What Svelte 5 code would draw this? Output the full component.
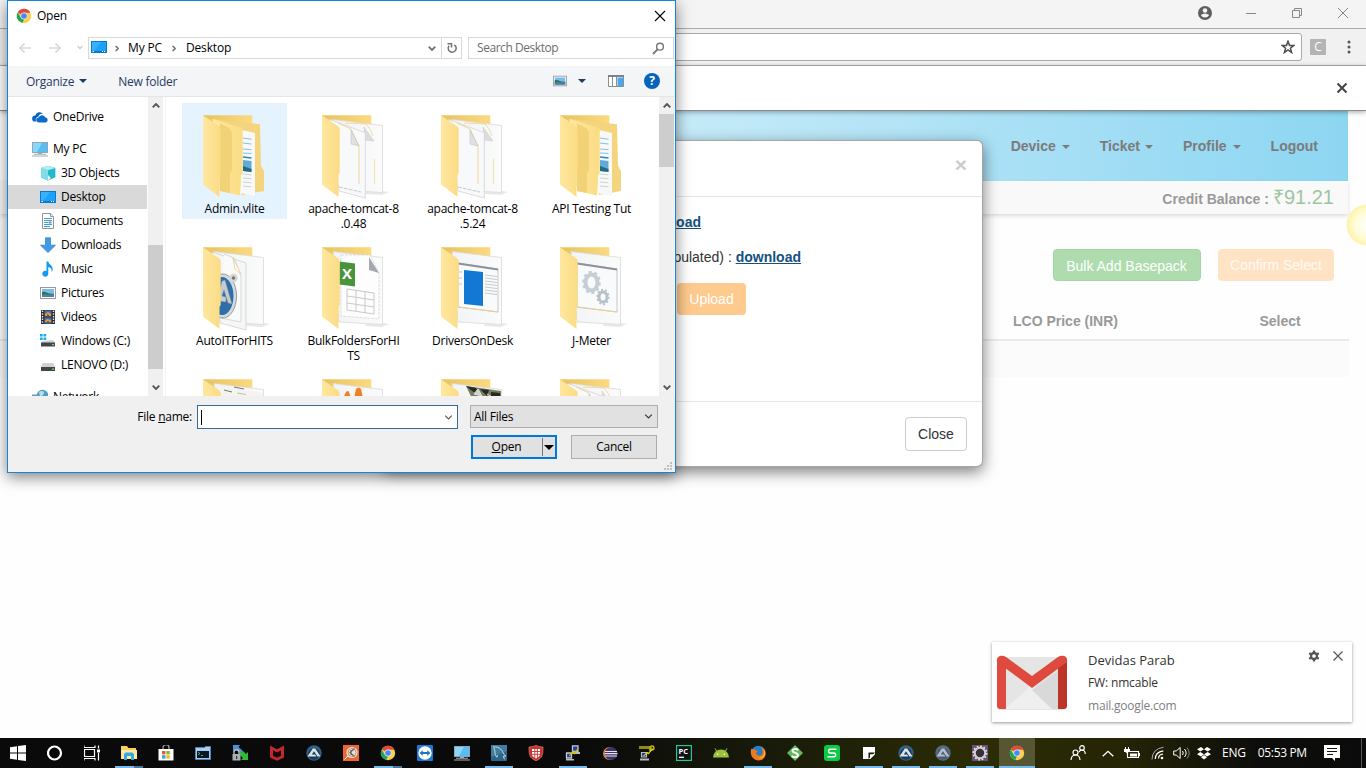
<script>
  const places = [
    { name: 'OneDrive', icon: 'cloud', root: true, gap: true },
    { name: 'My PC', icon: 'pc', root: true },
    { name: '3D Objects', icon: 'cube' },
    { name: 'Desktop', icon: 'desktop', selected: true },
    { name: 'Documents', icon: 'document' },
    { name: 'Downloads', icon: 'download' },
    { name: 'Music', icon: 'music' },
    { name: 'Pictures', icon: 'picture' },
    { name: 'Videos', icon: 'video' },
    { name: 'Windows (C:)', icon: 'windrive' },
    { name: 'LENOVO (D:)', icon: 'drive', gap: true },
    { name: 'Network', icon: 'network', root: true }
  ];
  const folders = [
    { lines: ['Admin.vlite'], kind: 'nested', hover: true },
    { lines: ['apache-tomcat-8', '.0.48'], kind: 'papers' },
    { lines: ['apache-tomcat-8', '.5.24'], kind: 'papers' },
    { lines: ['API Testing Tut'], kind: 'nested' },
    { lines: ['AutoITForHITS'], kind: 'autoit' },
    { lines: ['BulkFoldersForHI', 'TS'], kind: 'excel' },
    { lines: ['DriversOnDesk'], kind: 'drivers' },
    { lines: ['J-Meter'], kind: 'gears' },
    { lines: [], kind: 'scribble' },
    { lines: [], kind: 'cones' },
    { lines: [], kind: 'photo' },
    { lines: [], kind: 'sheets' }
  ];
  const tasks = [
    ['windows'], ['cortana'], ['taskview'], ['explorer', 'split'], ['store'], ['console'], ['winscp'],
    ['mcafee'], ['autoit'], ['orange'], ['chrome', 'split'], ['teamviewer'], ['pc'], ['mysql', 'on'],
    ['shield'], ['putty', 'on'], ['eclipse'], ['puttygen'], ['pycharm'], ['android'], ['firefox', 'on'],
    ['sdiamond'], ['ssquare'], ['note', 'on'], ['autoit', 'on'], ['autoit2', 'on'], ['gear', 'on'], ['chrome', 'active']
  ];
</script>

{#snippet icon(name)}
  <svg class="ic" viewBox="0 0 16 16" width="16" height="16" aria-hidden="true">
    {#if name === 'chrome'}
      <circle cx="8" cy="8" r="7.2" fill="#fcd04b" />
      <path d="M8 8 1.7 4.5A7.2 7.2 0 0 1 14.4 4.7L8 4.8Z" fill="#dd4b3e" />
      <path d="M1.7 4.4 5 10l3 1.5-1.7 3.5A7.2 7.2 0 0 1 1.7 4.4Z" fill="#1da462" />
      <circle cx="8" cy="8" r="3.4" fill="#e9eef8" /><circle cx="8" cy="8" r="2.8" fill="#4a86f5" />
    {:else if name === 'cloud'}
      <path d="M3 12.6a3 3 0 0 1 .3-6A4.4 4.4 0 0 1 11 4.8a4 4 0 0 0-4.6 3A3 3 0 0 0 4.3 12.6Z" fill="#0a64bd" />
      <path d="M6.8 13.5a2.5 2.5 0 0 1-.2-5 3.6 3.6 0 0 1 6.6-.3 2.7 2.7 0 0 1 .5 5.3Z" fill="#0a6ccc" />
    {:else if name === 'pc'}
      <rect x=".5" y="1.5" width="15" height="10" fill="#58bdf5" stroke="#8fa6b5" />
      <path d="M1 2h9L5 11H1Z" fill="#8cd5fb" /><path d="M6 12h4v1H6ZM2 12.8h12v1H2ZM0 14.5h16v1H0Z" fill="#9dafb9" />
    {:else if name === 'cube'}
      <path d="M1 3 8 .8 15.4 3v9.3L8 15.5 1 12.5Z" fill="#21b9cb" /><path d="M1 3l7 2.3v10.2L1 12.5Z" fill="#83dce5" /><path d="m1 3 7-2.2L15.4 3 8 5.3Z" fill="#b2edf1" /><path d="m8 10 3 3-3 2.500Z" fill="#e9f7dc" />
    {:else if name === 'desktop'}
      <rect x=".5" y="2.500" width="15" height="11" fill="#1ba1fa" stroke="#087bd0" /><path d="M1 3h9L4 11H1Z" fill="#38b2ff" /><path d="M1 12h14v1H1Z" fill="#0677d1" /><path d="M1.500 12h1.500v1H1.500zM11 12h1v1h-1zM13 12h1v1h-1z" fill="#fff" />
    {:else if name === 'document'}
      <path d="M2.500.5h8l3 3v12h-11Z" fill="#fff" stroke="#91969b" /><path d="M10.500.5v3h3" fill="#eee" stroke="#91969b" /><path d="M4 5.500h8M4 7.500h8M4 9.500h4M4 11.500h8M4 13.500h6" stroke="#3c9fd8" /><path d="M8.500 8.500h3v2h-3Z" fill="#7596a8" />
    {:else if name === 'download'}
      <path d="M5.500.8h5v7.400h5L8 15.600.5 8.200h5Z" fill="#3d9be8" stroke="#317fc2" stroke-width=".7" />
    {:else if name === 'music'}
      <path d="M6.500.5h1.800c.4 3.200 4.800 3.700 4.400 8.500-.1 1-.6 1.800-1.200 2.300C12.400 8.200 10.700 6.300 8.300 6v6.800A3 3 0 1 1 6.500 10Z" fill="#119cf1" />
    {:else if name === 'picture' || name === 'view'}
      <rect x=".5" y="2.500" width="15" height="11" fill="#fff" stroke="#939ba1" /><path d="M2 4h12v8H2Z" fill="#79bce9" /><path d="M2 7c4-1 5 2 12 1.800V12H2Z" fill="#2d715a" /><path d="M2 10c3-2 6 .5 12-1v3H2Z" fill="#527fa0" />
    {:else if name === 'video'}
      <path d="M1 1h14v14H1Z" fill="#2a2c30" /><path d="M2.500 1.500v13M13.500 1.500v13" stroke="#e2e2e2" stroke-width="1.400" stroke-dasharray="1.500 1.200" /><path d="M4.500 1.500h7v6h-7zM4.500 8.500h7v6h-7z" fill="#416fba" /><path d="M5 5l3-2 3 2v2H5zm0 7 2-2 4 1v2H5z" fill="#e1a12e" /><path d="m7 5 2 1v1H7zm0 7h2v1H7z" fill="#c42f28" />
    {:else if name === 'windrive'}
      <path d="M0 1h2.700v2.600H0zM3.500 1h2.700v2.600H3.500zM0 4.400h2.700V7H0zM3.500 4.400h2.700V7H3.500z" fill="#12b1ee" /><path d="m3 8 10-1 2 3H1Z" fill="#ccd0d2" /><path d="M1 9.500h14v4H1Z" fill="#424648" /><path d="M12 11h2v1.200h-2z" fill="#58ed59" />
    {:else if name === 'drive'}
      <path d="M3 6h10l2 4H1Z" fill="#ced2d4" /><path d="M1 10h14v4H1Z" fill="#424648" /><path d="M12 11.500h2v1.200h-2z" fill="#58ed59" />
    {:else if name === 'network'}
      <circle cx="10.500" cy="6.500" r="5.800" fill="#4d9fc5" /><path d="M7 3c2-2 6-1 5 1s-1 3-4 3z" fill="#b9deea" /><path d="M0 6h7v5H0Z" fill="#4daae0" stroke="#7995a6" />
    {:else if name === 'windows'}
      <path d="M0 2.200 7 1.200v6.400H0ZM8 1.100 16 0v7.600H8ZM0 8.500h7v6.300l-7-1ZM8 8.500h8V16l-8-1.100Z" fill="#fff" />
    {:else if name === 'cortana'}
      <circle cx="7.500" cy="8" r="6.500" fill="none" stroke="#fff" stroke-width="2.200" />
    {:else if name === 'taskview'}
      <path d="M0 .5v2h11v-2M0 15.500v-2h11v2M.5 4.500h10v7H.5ZM14.500.5v3M14.500 8v7.500" fill="none" stroke="#fff" stroke-width="1.200" /><path d="M13 4.500h3v3h-3z" fill="#fff" />
    {:else if name === 'explorer'}
      <path d="M0 1h6l1.500 2H15v11H0Z" fill="#f7cf63" /><path d="M0 5h16v9H0Z" fill="#ffe9a0" /><path d="M3 15V9l1.500-1.500h7L13 9v6h-3v-4H6v4Z" fill="#36a9e3" />
    {:else if name === 'store'}
      <path d="M5 4V2.700a3 3 0 0 1 6 0V4" fill="none" stroke="#aaa" stroke-width="1.200" /><path d="M.5 4h15v11.500H.5Z" fill="#fff" /><path d="M4 6h3.500v3.400H4z" fill="#f15a2b" /><path d="M8.300 6h3.500v3.400H8.300z" fill="#7dbb31" /><path d="M4 10.200h3.500v3.400H4z" fill="#2fa3e5" /><path d="M8.300 10.200h3.500v3.400H8.300z" fill="#fab91b" />
    {:else if name === 'console'}
      <path d="M.5 2.500h9l1-1h5v13H.5Z" fill="#a8cdee" stroke="#4b83b9" /><path d="M2 6h12v7H2Z" fill="#0b1724" /><path d="m3 7 2 1.500L3 10M6 10.500h2" stroke="#8fd08f" fill="none" stroke-width=".7" />
    {:else if name === 'winscp'}
      <path d="M1 0h7L6.500 2 11 6 8.500 8.500 4 4.500 1 7Z" fill="#4f8ed4" /><path d="m8 8 3-2 3 3 2-2v8H9l2-2-3-3Z" fill="#2ebb35" /><path d="M.5 9h8v6.500h-8Z" fill="#aab0b4" /><path d="M2 9V7.300a2.500 2.500 0 0 1 5 0V9" fill="none" stroke="#b9bec0" stroke-width="1.400" /><path d="M4 11h1.200v3H4z" fill="#333" />
    {:else if name === 'mcafee'}
      <path d="m1 .5 7 3.700 7-3.700v12L8 15.800l-7-3.300Z" fill="#c2282e" /><path d="M4 5.200 8 7.400l4-2.200v5.600l-4 2-4-2Z" fill="#16070a" />
    {:else if name === 'autoit' || name === 'autoit2'}
      <circle cx="8" cy="8" r="7.700" fill={name === 'autoit' ? '#335f84' : '#596b83'} /><circle cx="8" cy="9" r="5.800" fill={name === 'autoit' ? '#183a5c' : '#485a78'} /><path d="M1.500 11.500 6.800 3.500h2.400l5.300 8h-3L8 6.300 5.800 9.500H9l1.400 2Z" fill={name === 'autoit' ? '#dde3e6' : '#b7bec8'} />
    {:else if name === 'orange'}
      <path d="M0 0h16v16H0Z" fill="#ef6531" /><circle cx="9" cy="7.500" r="5.600" fill="#e9e4df" /><circle cx="9" cy="7.500" r="4" fill="none" stroke="#9a9088" stroke-width=".9" /><path d="M11.500 3.500 7 7.600l4.500 4M8 5v5" fill="none" stroke="#8d5a3c" stroke-width="1.300" /><path d="m4.800 11-3.300 3.500" stroke="#fff" />
    {:else if name === 'teamviewer'}
      <rect width="16" height="16" rx="1" fill="#1a79d4" /><circle cx="8" cy="8" r="6.700" fill="#fff" /><path d="m2.500 8 3.300-2.700v1.800h4.400V5.300L13.500 8l-3.300 2.700V8.900H5.800v1.800Z" fill="#1d74c7" />
    {:else if name === 'mysql'}
      <rect width="16" height="16" rx="1" fill="#2d6588" /><path d="M0 0h16v6L0 12Z" fill="#407d9e" /><path d="M2 2c7-.8 9.800 4 10.500 7l2.300 2-2.500.3 1.200 3M3 3c1.200 2.700.7 3.800 1.200 6.700l1.600 2.500.8-2" fill="none" stroke="#c9deea" />
    {:else if name === 'shield'}
      <path d="M8 .2C5 2 3 1.600 1 2c0 7 0 11 7 13.800C15 13 15 9 15 2c-2-.4-4 0-7-1.800Z" fill="#c9332f" stroke="#eb8d7f" stroke-width=".6" /><path d="M4 4h8v6c-1 2-2 2.500-4 3.400C6 12.500 5 12 4 10Z" fill="#fff" /><path d="M4 6.500h8M4 9.300h8M6.800 4v9M9.400 4v9" stroke="#c9332f" stroke-width=".9" />
    {:else if name === 'putty'}
      <path d="M7.500.8h5.500v5.500H7.500zM1.500 8h5v5h-5z" fill="#1840a3" stroke="#c4c7cc" stroke-width="1.300" /><path d="M7 7h8v2H7zM1 14h8v1.500H1z" fill="#b9bcc0" /><path d="m4 11 4-4.500.5 2L13 3.700 9.500 9 8 7.800Z" fill="#ffef25" stroke="#d4bb00" />
    {:else if name === 'puttygen'}
      <path d="M0 2.500h12M10.500 6l3-3" stroke="#8c8b1c" stroke-width="3" /><circle cx="13" cy="3" r="2" fill="none" stroke="#c4b91e" stroke-width="1.300" /><path d="M2.500 7.500h5v4.500h-5z" fill="#1838a0" stroke="#b9bcc0" stroke-width="1.200" /><path d="M1 13.500h9v2H1z" fill="#b8bbc2" /><path d="m4.500 11 4-4 .5 1.500L13 4.500 9.500 9 8 8Z" fill="#ffee29" stroke="#e1cc10" />
    {:else if name === 'eclipse'}
      <circle cx="7.500" cy="8.500" r="6.500" fill="#e78531" /><circle cx="9" cy="8.500" r="6.500" fill="#393568" /><path d="M3 6.500h12M2.500 8.700h13M3 11h12" stroke="#e7e4ef" stroke-width="1.200" />
    {:else if name === 'pycharm'}
      <rect x=".6" y=".6" width="14.800" height="14.800" fill="#101313" stroke="#25d596" stroke-width="1.100" /><text x="2.500" y="8.800" font-size="7.500" font-weight="700" letter-spacing="0" fill="#fff">PC</text><path d="M3 12.300h5" stroke="#fff" stroke-width="1.300" />
    {:else if name === 'android'}
      <path d="M0 12.500a8 8 0 0 1 16 0Z" fill="#9ac33b" /><path d="m3.500 6-1.400-2.600M12.500 6l1.400-2.600" stroke="#9ac33b" /><circle cx="4.700" cy="9.300" r=".8" fill="#fff" /><circle cx="11.300" cy="9.300" r=".8" fill="#fff" />
    {:else if name === 'firefox'}
      <circle cx="8.300" cy="7.700" r="7" fill="#267fc5" /><path d="M1.300 3.500c.5 1 3 .3 4 1.500L8 6 6 7.800c1 4 5.800 3.500 6.400.5C13.500 5 11 2 10 1.500c7.500 2 7.300 11 1.500 13.400C5 17-1 12 1.300 3.500Z" fill="#ee7921" /><path d="M13.400 4c2.600 5-1 9-5 9.200 5 1.800 9-4.800 5-9.200Z" fill="#fac638" />
    {:else if name === 'sdiamond'}
      <path d="m8 0 8 8-8 8-8-8Z" fill="#62b85b" /><path d="M11.300 5C9 3.300 5.500 4 5.500 6s5.400 1.500 5.400 4-3.900 3-6.300 1" fill="none" stroke="#fff" stroke-width="2" />
    {:else if name === 'ssquare'}
      <rect width="16" height="16" rx="3" fill="#0bca43" /><path d="M12.500 4.300H5.800a2 2 0 0 0 0 3.700h4.500a2 2 0 0 1 0 3.800H3.500" fill="none" stroke="#fff" stroke-width="1.600" />
    {:else if name === 'note'}
      <path d="M2 2h12v7l-5 5H2Z" fill="#fff" /><path d="M7.500 14V7.500H14Z" fill="#16180c" /><path d="M9 14V9.300h5Z" fill="#fff" />
    {:else if name === 'gear'}
      <path d="M0 0h16v16H0Z" fill="#66517e" /><circle cx="8" cy="8" r="6.700" fill="none" stroke="#ede8dc" stroke-width="1.600" stroke-dasharray="1.800 1.700" /><circle cx="8" cy="8" r="5.200" fill="#39303a" stroke="#d4d0cf" stroke-width="2" />
    {/if}
  </svg>
{/snippet}

{#snippet folder(kind)}
  <svg class="folder" viewBox="0 0 105 96" width="105" height="96" aria-hidden="true">
    <defs>
      <linearGradient id="flap" x1="0" x2="1"><stop offset="0" stop-color="#ffe79f" /><stop offset="1" stop-color="#fbdc84" /></linearGradient>
      <linearGradient id="back" x1="0" x2="1"><stop offset="0" stop-color="#e7c35e" /><stop offset="1" stop-color="#fbda80" /></linearGradient>
      <linearGradient id="sheet" x1="0" x2="1"><stop offset="0" stop-color="#f1f3f5" /><stop offset="1" stop-color="#fbfbfb" /></linearGradient>
    </defs>
    <path d="M21 12.200h49.300v70H30Z" fill="url(#back)" />
    {#if kind === 'nested'}
      <path d="m31 16 47 5.300 1 41.700 3 5v20L60 92Z" fill="#f4d57d" />
      <path d="m60 27 13 3v63l-15-3Z" fill="#f7f8f8" />
      <path d="m61 35 8.500 1.300M61 40l8.500 1M61 46l8.500.7M61 50l8.500.5" stroke="#8bc0e1" stroke-width="1" /><path d="m61 54 8.500 1" stroke="#238bc9" stroke-width="1.600" />
      <path d="m61 57 8.500 1v11l-8.500-1Z" fill="#62abd8" /><path d="m61 63 8.500 3v3l-8.500-1Z" fill="#216c83" />
      <path d="m61 71 8.500.8M61 75l8.500.8M61 79l8.500.8M61 83l8.500.8" stroke="#c4c8cb" stroke-width=".8" />
      <path d="m30.300 15.700 30.400 9.600V70l-1.700 2-1 20.500L38 88Z" fill="url(#flap)" />
      <path d="m38 20.500 9 4.500q3 2 3 7v35l-2 3v20L38 88Z" fill="#f1d277" />
    {:else}
      <path d="m66 85 22 4-7 3-17-1Z" fill="#e9e9e9" />
      <path d="m32 16.500 49.500 6v67L38 87Z" fill="url(#sheet)" stroke="#d9d9d9" stroke-width=".8" />
      {#if kind === 'papers' || kind === 'sheets'}
        <path d="m44 20 21 1q5 5 7 12" fill="none" stroke="#f0d38a" stroke-width=".8" /><path d="M73.500 56v25" stroke="#f3dca1" stroke-width=".9" /><path d="m63 24 10 14-9-1Z" fill="#dadcdf" stroke="#c9c9c9" stroke-width=".5" />
        <path d="m28.500 16.300 35.800 13.400V95L38 88Z" fill="#f8f9fb" stroke="#cecfd1" stroke-width=".7" />
        <path d="m37 20 13 6 8 17v38" fill="none" stroke="#f0d38a" stroke-width=".9" /><path d="m50 27 8 16-8-2Z" fill="#dfe1e4" stroke="#bbb" stroke-width=".5" />
        <path d="m38 84 22 5" stroke="#c7c9cb" stroke-dasharray="4 1" />
      {:else if kind === 'autoit'}
        <path d="m30 17 34 11v67L38 88Z" fill="#f5f6f7" stroke="#cfd0d1" stroke-width=".8" />
        <path d="m42 19 10 4 7 18v46l-21-4" fill="#fafafa" stroke="#d9d9d9" /><path d="m51 23 8 16-6-5Z" fill="#fff" stroke="#e1c682" stroke-width=".7" />
        <ellipse cx="41" cy="61" rx="13.500" ry="22" fill="#d5dadd" stroke="#929ba3" /><ellipse cx="40" cy="61" rx="11.500" ry="19" fill="#2e6eaa" /><path d="m35 66 5-20 3-1 7 24-4-1-4-13-2 6 4 1v5Z" fill="#c7cbcf" stroke="#7d8993" stroke-width=".5" /><circle cx="51.500" cy="43" r="3" fill="#777" stroke="#d6d6d6" stroke-width="2.500" />
      {:else if kind === 'excel'}
        <path d="M40 20h29l9 18v46l-38-3Z" fill="#fdfdfd" stroke="#d7d7d7" stroke-dasharray="3 1" stroke-width=".8" /><path d="m68 22 10 16-10-3Z" fill="#a5a8af" />
        <path d="m38.500 26.500 15.500 2v23l-15.500-2Z" fill="#49943b" /><text x="41" y="44" font-size="15" font-weight="700" fill="#fff">X</text>
        <path d="m46 54 27 4v21l-27-4ZM46 61l27 4M46 68l27 4M55 55v21M64 56v22" fill="none" stroke="#c9c9cb" />
      {:else if kind === 'drivers' || kind === 'gears'}
        <path d="m38 28 40 6v43l-40-5Z" fill="#f9fafb" stroke="#b8bbbe" stroke-width=".8" /><path d="m38 28.500 40 6" stroke="#8c949b" stroke-width="2" /><path d="m38 72 40 5" stroke="#e8d18d" />
        {#if kind === 'drivers'}
          <path d="m44 35 19 2v34l-19-2Z" fill="#1278d4" /><path d="M39 37h3m-3 6h3m-3 6h3M65 40l12 1.500M65 43l12 1.500M65 46l12 1.500M65 49l12 1.500M65 52l12 1.500M65 55l12 1.500M65 58l12 1.500" stroke="#b6bcc1" stroke-width=".8" />
        {:else}
          <ellipse cx="52.500" cy="47.500" rx="6" ry="8" fill="none" stroke="#c6ced5" stroke-width="4" /><ellipse cx="52.500" cy="47.500" rx="8" ry="10.500" fill="none" stroke="#c6ced5" stroke-width="2.500" stroke-dasharray="3 2.800" />
          <ellipse cx="64" cy="62" rx="4" ry="5" fill="none" stroke="#b7c1c9" stroke-width="3" /><ellipse cx="64" cy="62" rx="5.500" ry="7.300" fill="none" stroke="#b7c1c9" stroke-width="2" stroke-dasharray="2 2" />
        {/if}
      {:else if kind === 'scribble'}
        <path d="m34 17 47 9v20H36Z" fill="#f5f3ed" /><path d="m52 20 10 2M42 23l8 2" stroke="#555" stroke-width=".8" /><path d="m55 26 9 1.500" stroke="#999" stroke-width=".6" />
      {:else if kind === 'cones'}
        <path d="m42 31 3-6q2-2 3 0l2 6ZM53 31l2-9q3-3 5 0l2 9Z" fill="#ef8122" />
      {:else if kind === 'photo'}
        <path d="m46 19 35 5v20H58Z" fill="#777b61" /><path d="m46 19 10 2 4 7-8-4ZM60 22l9 1-2 6ZM71 25l9 1v5H71Z" fill="#252b21" /><path d="m58 22 4 7-8-2ZM67 27l5 3" stroke="#e0e0dc" fill="#d0d2cd" />
      {/if}
    {/if}
    <path d="m21 12.200 16 11q1.700 1.200 1.700 3.500V70L37.500 72v22L21 81.500Z" fill="url(#flap)" />
  </svg>
{/snippet}

{#snippet chev(dir)}
  <svg class="chev {dir}" viewBox="0 0 8 5" width="8" height="5" aria-hidden="true"><path d="M.7.7 4 4 7.300.7" fill="none" stroke="currentColor" stroke-width={dir === 'thin' ? 1.1 : 1.9} /></svg>
{/snippet}

<div class="screen">
  <main class="browser">
    <div class="tabs">
      <svg width="16" height="16" viewBox="0 0 16 16"><circle cx="8" cy="8" r="7" fill="#5f5f5f" /><circle cx="8" cy="5.500" r="2.300" fill="#f4f4f4" /><path d="M3.800 10q4.200-3 8.400 0-1.500 2.500-4.200 2.500T3.800 10Z" fill="#f4f4f4" /></svg>
      <svg width="10" height="10" viewBox="0 0 10 10"><path d="M0 5.500h10" stroke="#888" /></svg>
      <svg width="12" height="12" viewBox="0 0 12 12"><path d="M1.500 3.500h7v7h-7ZM3.500 3.500v-2h7v7h-2" fill="none" stroke="#888" /></svg>
      <svg width="12" height="12" viewBox="0 0 12 12"><path d="m1 1 10 10M11 1 1 11" stroke="#888" /></svg>
    </div>
    <div class="tools">
      <div class="url"><svg width="14" height="14" viewBox="0 0 14 14"><path d="m7 1.200 1.500 4.200 4.300.1-3.400 2.700 1.200 4.300L7 10l-3.600 2.500 1.200-4.300-3.400-2.700 4.300-.1Z" fill="none" stroke="#4b4d52" stroke-width="1.500" /></svg></div>
      <span class="ext">C</span>
      <svg class="dots" width="4" height="14" viewBox="0 0 4 14"><circle cx="2" cy="2" r="1.500" fill="#555" /><circle cx="2" cy="7" r="1.500" fill="#555" /><circle cx="2" cy="12" r="1.500" fill="#555" /></svg>
    </div>
    <div class="info"><svg width="12" height="12" viewBox="0 0 12 12"><path d="m1.500 1.500 9 9M10.500 1.500l-9 9" stroke="#444" stroke-width="2" /></svg></div>
    <nav>
      <span>Device<i class="caret"></i></span><span>Ticket<i class="caret"></i></span><span>Profile<i class="caret"></i></span><span>Logout</span>
    </nav>
    <div class="balance"><b>Credit Balance :</b><span>₹91.21</span></div>
    <div class="actions"><button class="bulk">Bulk Add Basepack</button><button class="confirm">Confirm Select</button></div>
    <div class="thead"><span>LCO Price (INR)</span><span>Select</span></div>
    <div class="trow"></div>
    <div class="ball"></div>
  </main>

  <section class="modal">
    <header>×</header>
    <div class="mbody">
      <p><a href="#top">download</a></p>
      <p>populated) : <a href="#top">download</a></p>
      <button class="upload">Upload</button>
    </div>
    <footer><button>Close</button></footer>
  </section>

  <section class="dialog">
    <div class="title">{@render icon('chrome')}<span>Open</span>
      <svg width="12" height="12" viewBox="0 0 12 12"><path d="m1 1 10 10M11 1 1 11" stroke="#000" stroke-width="1.100" /></svg>
    </div>
    <div class="address">
      <svg class="arrows" width="76" height="16" viewBox="0 0 76 16"><path d="M23 8H12m4.500-4.500L12 8l4.500 4.500M41 8h11m-4.500-4.500L52 8l-4.500 4.500" fill="none" stroke="#d7d7d7" stroke-width="1.700" /><path d="m69.500 6 2.500 2.500L74.500 6" fill="none" stroke="#ccc" stroke-width="1.300" /></svg>
      <div class="crumbs">{@render icon('desktop')}<span class="gt">{@render chev('right')}</span><span class="crumb">My PC</span><span class="gt">{@render chev('right')}</span><span class="crumb">Desktop</span><span class="down">{@render chev('')}</span>
        <span class="refresh"><svg width="12" height="12" viewBox="0 0 12 12"><path d="M8.300 2.800A4 4 0 1 1 3 3.800M1.500 1.700h4v3.800" fill="none" stroke="#727272" stroke-width="1.500" /></svg></span>
      </div>
      <div class="search"><span>Search Desktop</span><svg width="13" height="13" viewBox="0 0 13 13"><circle cx="8" cy="4.700" r="3.400" fill="none" stroke="#777" stroke-width="1.400" /><path d="M5.500 7.300 1 12" stroke="#777" stroke-width="1.900" /></svg></div>
    </div>
    <div class="commands">
      <span class="org">Organize</span><i class="tri"></i><span class="new">New folder</span>
      <span class="view">{@render icon('view')}</span><i class="tri second"></i>
      <svg class="preview" width="16" height="12" viewBox="0 0 16 12"><path d="M.5 1h15v10.500H.5Z" fill="#fff" stroke="#8a8e91" /><path d="M0 0h16v2H0z" fill="#7d8286" /><path d="M4.500 2v10M8.500 2v10" stroke="#8a8e91" /><path d="M9.500 2.500H15V11H9.500z" fill="#48a7ed" /></svg>
      <span class="help">?</span>
    </div>
    <div class="panes">
      <ul>
        {#each places as p}
          <li class:root={p.root} class:gap={p.gap} class:selected={p.selected}>{@render icon(p.icon)}<span>{p.name}</span></li>
        {/each}
      </ul>
      <div class="bar left"><span>{@render chev('up')}</span><i></i><span>{@render chev('')}</span></div>
      <div class="files">
        {#each folders as f}
          <div class="tile" class:hover={f.hover}>
            {@render folder(f.kind)}
            <div class="label">{#each f.lines as l}<span>{l}</span>{/each}</div>
          </div>
        {/each}
      </div>
      <div class="bar right"><span>{@render chev('up')}</span><i></i><span>{@render chev('')}</span></div>
    </div>
    <div class="bottom">
      <div class="line"><label for="fn">File <u>n</u>ame:</label><div class="field" id="fn"><i></i>{@render chev('thin')}</div><div class="types"><span>All Files</span>{@render chev('thin')}</div></div>
      <div class="line two"><div class="open"><span><u>O</u>pen</span><i></i><b></b></div><div class="cancel">Cancel</div></div>
      <svg class="grip" width="9" height="9" viewBox="0 0 9 9"><path d="M6 0h2v2H6zM3 3h2v2H3zM6 3h2v2H6zM0 6h2v2H0zM3 6h2v2H3zM6 6h2v2H6z" fill="#bfbfbf" /></svg>
    </div>
  </section>

  <aside class="toast">
    <svg width="72" height="56" viewBox="0 0 72 56">
      <path d="M3 2h66v53H3Z" fill="#e5e5e5" /><path d="m9 54 27-24 27 24Z" fill="#efefef" /><path d="m36 35 20 19h7V15Z" fill="#d9d9d9" />
      <path d="M1 6q0-4 5-5l4 2v51H4q-3 0-3-3Z" fill="#df4b40" /><path d="M62 4q9-6 9 2v45q0 3-3 3h-6Z" fill="#bd3429" /><path d="M1 7C0 2 5-1 10 2l26 19L62 2c5-3 10 0 9 5L36 33Z" fill="#df4a3e" />
    </svg>
    <div class="msg"><span class="from">Devidas Parab</span><span>FW: nmcable</span><span class="site">mail.google.com</span></div>
    <div class="tctl">
      <svg width="12" height="12" viewBox="0 0 12 12"><circle cx="6" cy="6" r="3" fill="none" stroke="#555" stroke-width="2.300" /><path d="M6 .5v2M6 9.500v2M1.200 3.200 3 4.300M9 7.700l1.800 1.100M10.800 3.200 9 4.300M3 7.700 1.200 8.800" stroke="#555" stroke-width="2.200" /></svg>
      <svg width="10" height="10" viewBox="0 0 10 10"><path d="m.5.5 9 9M9.500.5l-9 9" stroke="#555" stroke-width="1.200" /></svg>
    </div>
  </aside>

  <div class="taskbar">
    {#each tasks as [name, state]}<div class="task {state ?? ''}">{@render icon(name)}</div>{/each}
    <div class="tray">
      <svg width="16" height="16" viewBox="0 0 16 16"><path d="M1 15q.3-5 4.500-5t4.500 5M9 7q1-2 3-2 3 0 3.300 4" fill="none" stroke="#fff" stroke-width="1.200" /><circle cx="5.500" cy="7.500" r="2.500" fill="none" stroke="#fff" stroke-width="1.200" /><circle cx="12" cy="3" r="2.300" fill="none" stroke="#fff" stroke-width="1.200" /></svg>
      <svg class="t2" width="12" height="7" viewBox="0 0 12 7"><path d="m.7 6.300 5.300-5 5.300 5" fill="none" stroke="#fff" stroke-width="1.300" /></svg>
      <svg class="t3" width="16" height="13" viewBox="0 0 16 13"><path d="M3.500 4.500h11v6h-11Z" fill="none" stroke="#fff" stroke-width="1.200" /><path d="M6 6.500h7v3H6z" fill="#fff" /><path d="M15 6h1v3h-1zM0 2h6v3H4.500L3 6.500 1.500 5H0ZM1 0h1v2H1zM4 0h1v2H4z" fill="#fff" /></svg>
      <svg class="t4" width="14" height="14" viewBox="0 0 14 14"><circle cx="11" cy="12" r="1.300" fill="#fff" /><path d="M7.500 12.500q0-4 4.500-4.300M4.300 13q0-7 8-8.200" fill="none" stroke="#fff" stroke-width="1.200" /><path d="M1 13.500Q1 3 12.500 1.200" fill="none" stroke="#aaa" /></svg>
      <svg class="t5" width="17" height="14" viewBox="0 0 17 14"><path d="M.7 5h2.500l4-3.500v11L3.200 9H.7Z" fill="none" stroke="#fff" /><path d="M9.500 5q1.500 2 0 4M11.500 3q3.300 4 0 8" fill="none" stroke="#fff" /><path d="M14 1.500q4.300 5.500 0 11" fill="none" stroke="#888" /></svg>
      <svg class="t6" width="14" height="13" viewBox="0 0 14 13"><path d="m4 0 3 2.300L3.300 4.600 0 2.300ZM10 0l4 2.300-3.300 2.300L7 2.300ZM3.300 5 7 7.300 4 9.500 0 7.200ZM10.700 5 14 7.200l-4 2.300-3-2.200ZM7 8l3 2.300L7 12.500l-3-2.200Z" fill="#fff" /></svg>
      <span class="lang">ENG</span><span class="time">05:53 PM</span>
      <svg class="t7" width="16" height="16" viewBox="0 0 16 16"><path d="M0 0h16v13h-5v3l-3-3H0Z" fill="#fff" /><path d="M3 3.500h10M3 6.500h10M3 9.500h6" stroke="#15150a" stroke-width="1.100" /></svg>
      <i></i>
    </div>
  </div>
</div>

<style>
  :global(body) { margin: 0; overflow: hidden; background: #fff; }
  .screen { position: relative; width: 1366px; height: 768px; overflow: hidden; font: 12px/15px "Open Sans", "Noto Sans", sans-serif; letter-spacing: -0.25px; color: #000; }
  .screen * { box-sizing: border-box; }
  svg { display: block; flex: none; }
  button { font: inherit; letter-spacing: 0; }

  .browser { position: relative; isolation: isolate; height: 738px; display: flex; flex-direction: column; font: 14px/20px "Liberation Sans", Arial, sans-serif; letter-spacing: 0; background: #fefefe; }
  .tabs { height: 29px; background: #f4f4f4; border-bottom: 1px solid #adadad; display: flex; align-items: center; justify-content: flex-end; padding: 0 17px 2px 0; }
  .tabs svg + svg { margin-left: 33px; }
  .tabs svg:nth-child(3) { margin-left: 35px; }
  .tabs svg:nth-child(4) { margin-left: 34px; }
  .tools { height: 37px; background: #f1f1f1; border-bottom: 1px solid #b1b1b1; display: flex; align-items: center; padding: 0 15px 0 30px; }
  .url { flex: 1; height: 28px; border: 1px solid #a8a8a8; border-radius: 3px; background: #fff; display: flex; align-items: center; justify-content: flex-end; padding-right: 6px; }
  .ext { width: 16px; height: 16px; margin: 0 21px 0 8px; border-radius: 1px; background: #b4b4b4; color: #fff; font: 12px/16px "Open Sans", sans-serif; text-align: center; }
  .dots { margin-right: 0; }
  .info { position: relative; height: 45px; flex: none; background: #fff; border-bottom: 1px solid #8b8b8b; display: flex; align-items: center; justify-content: flex-end; padding-right: 18px; box-shadow: 0 1px 5px rgba(0,0,0,.35); z-index: 1; }
  nav { width: 1348px; height: 70px; background: linear-gradient(90deg, #fff, #8dd6f2); display: flex; align-items: center; justify-content: flex-end; gap: 30px; padding-right: 30px; font-weight: 700; color: #7b7b7b; }
  nav span { display: flex; align-items: center; gap: 6px; }
  nav span:nth-child(2) { gap: 5px; }
  .caret { border: 4px solid transparent; border-top-color: #7b7b7b; border-bottom: 0; margin-top: 1px; }
  .balance { width: 1348px; height: 33px; background: #f9f9f9; box-shadow: 0 2px 4px rgba(0,0,0,.14); display: flex; align-items: center; justify-content: flex-end; padding-right: 14px; color: #999; gap: 4px; }
  .balance b { padding-top: 3px; }
  .balance span { font-size: 20px; color: #9fc5a0; padding-bottom: 2px; }
  .actions { width: 1348px; padding: 35px 14px 0 0; display: flex; justify-content: flex-end; gap: 17px; }
  .actions button { height: 32px; border: 1px solid #a5d6a5; border-radius: 4px; background: #aedcae; color: #fff; width: 148px; padding: 1px 1px 0 0; }
  .actions .confirm { width: 116px; background: #ffe3c4; border-color: #ffe2c1; color: #fffaf3; padding: 0; }
  .thead { width: 1349px; height: 60px; border-bottom: 2px solid #eaeaea; display: flex; justify-content: flex-end; align-items: flex-end; padding-bottom: 8px; font-weight: 700; color: #999; }
  .thead span + span { width: 138px; margin-left: 93px; text-align: center; }
  .trow { width: 1349px; height: 36px; background: #fbfbfb; }
  .ball { position: absolute; left: 1347px; top: 205px; width: 40px; height: 40px; border-radius: 50%; background: radial-gradient(circle at 52% 50%, #fff 0, #fffbd9 45%, #fff2a0 75%, #f8dc7b 100%); box-shadow: 0 0 1px #f0d070; }

  .modal { position: absolute; left: 383px; top: 140px; width: 600px; height: 327px; border: 1px solid rgba(0,0,0,.35); border-radius: 6px; background: #fff; box-shadow: 0 5px 15px rgba(0,0,0,.5); font: 14px/20px "Liberation Sans", Arial, sans-serif; letter-spacing: 0; color: #333; }
  .modal header { height: 56px; border-bottom: 1px solid #e5e5e5; padding: 13px 15px 0 0; text-align: right; font: 700 21px/21px "Liberation Sans", sans-serif; color: #ccc; }
  .mbody { height: 204px; padding: 15px 0 0; width: 417px; display: flex; flex-direction: column; }
  .mbody p { margin: 0 0 15px; text-align: right; }
  .mbody p:first-child { width: 317px; }
  .mbody a { color: #14517f; font-weight: 700; text-decoration: underline; }
  .upload { margin-left: 293px; margin-top: 1px; width: 69px; height: 32px; border: 0; border-radius: 4px; background: #ffca8d; color: #fff; }
  .modal footer { border-top: 1px solid #e5e5e5; padding: 15px; display: flex; justify-content: flex-end; }
  .modal footer button { width: 62px; height: 34px; border: 1px solid #ccc; border-radius: 4px; background: #fff; color: #333; }

  .dialog { position: absolute; left: 7px; top: 0; width: 669px; height: 473px; border: 1px solid #1883d7; background: #fff; display: flex; flex-direction: column; box-shadow: 0 4px 14px rgba(0,0,0,.5); }
  .title { height: 29px; display: flex; align-items: center; padding: 0 9px 0 8px; gap: 5px; }
  .title > svg:last-child { margin-left: auto; }
  .address { height: 36px; display: flex; align-items: center; }
  .arrows { margin-right: 4px; }
  .crumbs { height: 22px; width: 374px; border: 1px solid #d9d9d9; display: flex; align-items: center; padding-left: 2px; }
  .crumbs .ic { margin-bottom: 2px; }
  .gt { width: 20px; color: #777; display: flex; justify-content: center; }
  .crumb { margin: 0 2px 0 1px; padding-bottom: 1px; letter-spacing: -.15px; }
  .crumb + .gt { width: 21px; }
  .down { margin-left: auto; padding-right: 5px; color: #777; }
  .refresh { width: 20px; height: 20px; border-left: 1px solid #d9d9d9; display: grid; place-items: center; }
  .search { margin-left: 6px; width: 206px; height: 22px; border: 1px solid #d9d9d9; display: flex; align-items: center; justify-content: space-between; padding: 0 8px; color: #6d6d6d; letter-spacing: -.45px; }
  .search span { padding-bottom: 1px; }
  .chev.right { transform: rotate(-90deg) scale(.8); }
  .chev.up { transform: rotate(180deg); }
  .commands { height: 31px; background: #f4f5f7; border-bottom: 1px solid #e5e6e7; display: flex; align-items: center; padding: 0 15px 0 18px; color: #1f3a63; }
  .tri { border: 4px solid transparent; border-top-color: #1f3a63; border-bottom: 0; margin-left: 5px; }
  .new { margin-left: 31px; }
  .view { margin-left: auto; }
  .view .ic { width: 14px; }
  .tri.second { margin-left: 11px; }
  .preview { margin: 0 20px 0 22px; }
  .help { width: 16px; height: 16px; border-radius: 50%; background: #0764bd; color: #fff; font-weight: 700; text-align: center; line-height: 16px; letter-spacing: 0; }
  .panes { height: 299px; display: flex; overflow: hidden; }
  ul { list-style: none; margin: 0; padding: 8px 0 0; width: 140px; height: 340px; flex: none; }
  li { height: 24px; width: 139px; display: flex; align-items: center; gap: 5px; padding-left: 32px; white-space: nowrap; }
  li span { padding-bottom: 2px; }
  li.root { padding-left: 24px; }
  li.gap { margin-bottom: 8px; }
  li.selected { background: #d9d9d9; }
  .bar { width: 15px; flex: none; background: #f0f0f0; display: flex; flex-direction: column; align-items: center; color: #555; }
  .bar span { height: 17px; display: grid; place-items: center; }
  .bar i { width: 100%; background: #cdcdcd; }
  .left i { height: 124px; margin-top: 131px; }
  .left span:last-child { margin-top: 10px; }
  .right i { height: 53px; }
  .right span:last-child { margin-top: auto; }
  .files { width: 494px; display: grid; grid-template-columns: repeat(4, 105px); grid-auto-rows: 132px; column-gap: 14px; padding: 6px 0 0 16px; border-left: 1px solid #f3f3f3; margin-left: 2px; flex: none; }
  .tile { height: 116px; }
  .hover { background: #e5f3ff; }
  .label { display: flex; flex-direction: column; align-items: center; margin-top: 2px; }
  .bottom { position: relative; flex: 1; background: #f0f0f0; padding-top: 9px; }
  .line { display: flex; height: 24px; align-items: center; }
  label { width: 189px; padding: 0 5px 1px 0; text-align: right; }
  .field { width: 261px; height: 24px; border: 1px solid #37699a; background: #fff; display: flex; align-items: center; justify-content: space-between; padding: 0 4px; color: #555; }
  .field i { width: 1px; height: 15px; margin-left: -1px; background: #000; }
  .thin { width: 9px; }
  .types { margin: 0 0 1px 12px; width: 188px; height: 23px; border: 1px solid #adadad; background: #e1e1e1; display: flex; align-items: center; justify-content: space-between; padding: 0 4px 0 3px; color: #333; }
  .types span { color: #000; }
  .two { margin-top: 6px; padding-left: 463px; }
  .open { width: 86px; height: 24px; border: 2px solid #0078d7; background: #e1e1e1; display: flex; align-items: center; }
  .open span { flex: 1; text-align: center; padding: 0 2px 1px 0; }
  .open i { width: 1px; height: 18px; background: #777; }
  .open b { border: 5px solid transparent; border-top: 5px solid #000; border-bottom: 0; margin: 0 1px; }
  .cancel { width: 86px; height: 24px; margin-left: 14px; border: 1px solid #adadad; background: #e1e1e1; text-align: center; line-height: 22px; }
  .grip { position: absolute; right: 2px; bottom: 1px; }

  .toast { position: absolute; left: 992px; top: 642px; width: 360px; height: 80px; background: #fff; box-shadow: 0 1px 3px rgba(0,0,0,.4); display: flex; padding: 13px 9px 0 4px; }
  .msg { display: flex; flex-direction: column; margin: -5px 0 0 20px; line-height: 22.500px; letter-spacing: -.15px; color: #333; }
  .from { font-size: 13px; line-height: 21px; letter-spacing: 0; padding-bottom: 1px; }
  .site { color: #808080; letter-spacing: -.2px; }
  .tctl { margin: -5px 0 0 auto; display: flex; gap: 13px; height: 12px; align-items: center; }

  .taskbar { position: absolute; left: 0; top: 738px; width: 1366px; height: 30px; background: linear-gradient(90deg, #0a0a0a 0 42%, #181a0a 56%, #2c2d05 72%, #252506 82%, #0d0d0b 92%, #0b0b0b); display: flex; }
  .task { width: 37px; height: 30px; flex: none; display: grid; place-items: center; position: relative; padding-right: 1px; }
  .on::after, .split::after, .active::after { content: ""; position: absolute; left: 4px; bottom: 0; width: 28px; height: 2px; background: #76b9ed; }
  .split::after { background: linear-gradient(90deg, #76b9ed 19px, #4a7799 19px); }
  .active { background: linear-gradient(#565633, #565633) 0 0 / 36px 30px no-repeat; }
  .active::after { left: 0; width: 36px; }
  .tray { flex: 1; display: flex; align-items: center; padding-left: 34px; color: #fff; letter-spacing: 0; }
  .t2 { margin-left: 16px; }
  .t3 { margin-left: 10px; }
  .t4 { margin-left: 11px; }
  .t5 { margin-left: 8px; }
  .t6 { margin-left: 7px; }
  .lang { margin-left: 11px; letter-spacing: -.2px; padding-bottom: 1px; }
  .time { margin-left: 12px; letter-spacing: -.35px; white-space: nowrap; padding-bottom: 1px; }
  .t7 { margin-left: auto; margin-right: 21px; }
  .tray > i { width: 1px; height: 30px; margin-right: 4px; background: #555; }
</style>
